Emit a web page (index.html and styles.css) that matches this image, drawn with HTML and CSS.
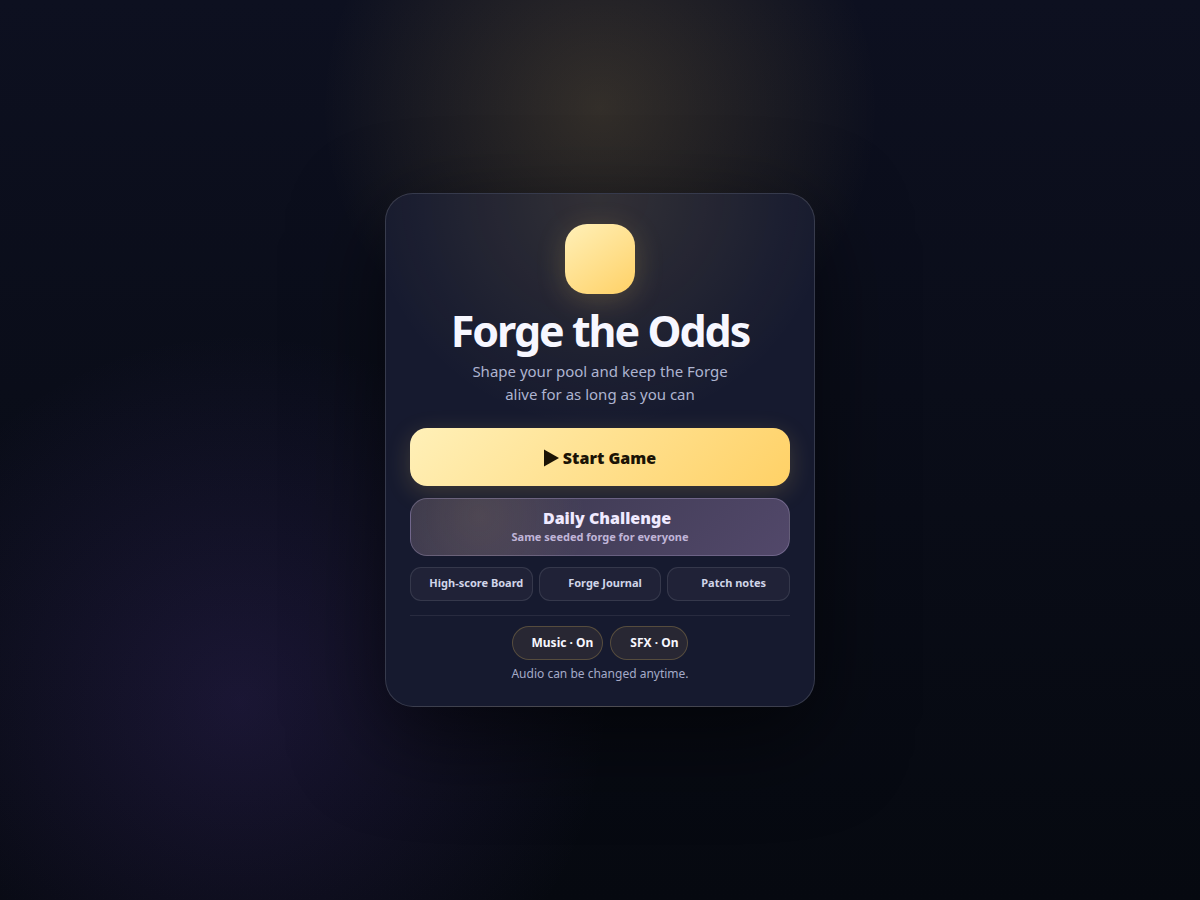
FILE: index.html
```
<!DOCTYPE html>
<html lang="en">
<head>
    <meta charset="UTF-8">
    <meta name="viewport" content="width=device-width, initial-scale=1.0">
    <title>Forge the Odds</title>
    <link rel="stylesheet" href="styles.css">
</head>
<body>
    <main class="menu">
        <div class="logo"></div>
        <h1>Forge the Odds</h1>
        <p class="tagline">Shape your pool and keep the Forge alive for as long as you can</p>

        <div class="actions">
            <button class="start">
                <svg class="play" viewBox="0 0 15 18" aria-hidden="true"><path d="M0 0.5L15 9L0 17.5Z"/></svg>
                <span>Start Game</span>
            </button>
            <button class="daily">
                <span class="daily-title">Daily Challenge</span>
                <small>Same seeded forge for everyone</small>
            </button>
            <div class="links">
                <button><span class="icon"></span>High-score Board</button>
                <button><span class="icon"></span>Forge Journal</button>
                <button><span class="icon"></span>Patch notes</button>
            </div>
        </div>

        <div class="audio">
            <div class="toggles">
                <button><span class="icon"></span>Music · On</button>
                <button><span class="icon"></span>SFX · On</button>
            </div>
            <p>Audio can be changed anytime.</p>
        </div>
    </main>
</body>
</html>
```

FILE: styles.css
```
*{
    margin: 0;
    padding: 0;
    box-sizing: border-box;
}

body{
    min-height: 100vh;
    display: flex;
    justify-content: center;
    align-items: center;
    font-family: "Noto Sans", sans-serif;
    color: #f7f7ff;
    background:
        radial-gradient(circle at 50% 12%, rgba(255, 209, 102, 0.16), transparent 28%),
        radial-gradient(circle at 20% 78%, rgba(124, 82, 220, 0.16), transparent 31%),
        linear-gradient(180deg, #0d1020, #060910);
}

button{
    font: inherit;
    color: inherit;
    border: none;
    cursor: pointer;
}

.menu{
    width: 100%;
    max-width: 430px;
    padding: 30px 24px 24px;
    border: 1px solid rgba(255, 255, 255, 0.14);
    border-radius: 28px;
    text-align: center;
    background:
        radial-gradient(circle at 50% 0%, rgba(255, 209, 102, 0.12), transparent 42%),
        #161a2f;
    box-shadow: 0 30px 90px rgba(0, 0, 0, 0.55);
}

.logo{
    width: 70px;
    height: 70px;
    margin: 0 auto 16px;
    border-radius: 22px;
    background: linear-gradient(145deg, #fff0b8, #ffd166);
    box-shadow: 0 6px 30px rgba(255, 209, 102, 0.2);
}

h1{
    font-size: 43px;
    line-height: 42px;
    font-weight: 700;
    letter-spacing: -2px;
}

.tagline{
    max-width: 290px;
    margin: 8px auto 22px;
    font-size: 15px;
    line-height: 23px;
    color: #aeb4d0;
}

.actions{
    display: flex;
    flex-direction: column;
    gap: 12px;
}

.start,
.daily{
    height: 58px;
    border-radius: 17px;
    font-size: 16px;
    font-weight: 900;
}

.start{
    display: flex;
    align-items: center;
    justify-content: center;
    gap: 4px;
    padding-top: 2px;
    color: #1b1305;
    background: linear-gradient(135deg, #fff0b8, #ffd166);
    box-shadow: 0 6px 24px rgba(255, 209, 102, 0.18);
}

.play{
    width: 15px;
    height: 18px;
    fill: currentColor;
}

.daily{
    display: flex;
    flex-direction: column;
    align-items: center;
    justify-content: center;
    border: 1px solid rgba(221, 205, 255, 0.24);
    color: #f0eaff;
    background:
        radial-gradient(circle at 18% 30%, rgba(255, 209, 102, 0.09), transparent 34%),
        linear-gradient(135deg, #38364b, #52486a);
}

.daily-title{
    padding-left: 14px;
    line-height: 20px;
}

.daily small{
    font-size: 11px;
    line-height: 18px;
    font-weight: 700;
    color: #c0b5d8;
}

.links{
    display: flex;
    gap: 6px;
    margin-top: -1px;
}

.links button{
    flex: 1;
    height: 34px;
    padding-bottom: 3px;
    display: flex;
    align-items: center;
    justify-content: center;
    border: 1px solid rgba(255, 255, 255, 0.1);
    border-radius: 11px;
    font-size: 11px;
    font-weight: 700;
    white-space: nowrap;
    color: #d0d5e8;
    background-color: rgba(255, 240, 255, 0.045);
}

.icon{
    width: 10px;
    flex: none;
}

.audio{
    margin-top: 14px;
    padding-top: 10px;
    border-top: 1px solid rgba(255, 255, 255, 0.08);
}

.toggles{
    display: flex;
    justify-content: center;
    gap: 7px;
}

.toggles button{
    height: 34px;
    padding: 0 9px 1px;
    display: flex;
    align-items: center;
    border: 1px solid rgba(255, 209, 102, 0.22);
    border-radius: 17px;
    font-size: 12px;
    font-weight: 700;
    background-color: rgba(255, 209, 102, 0.08);
}

.audio p{
    margin-top: 6px;
    font-size: 12px;
    line-height: 16px;
    color: #a4aac8;
}
```
